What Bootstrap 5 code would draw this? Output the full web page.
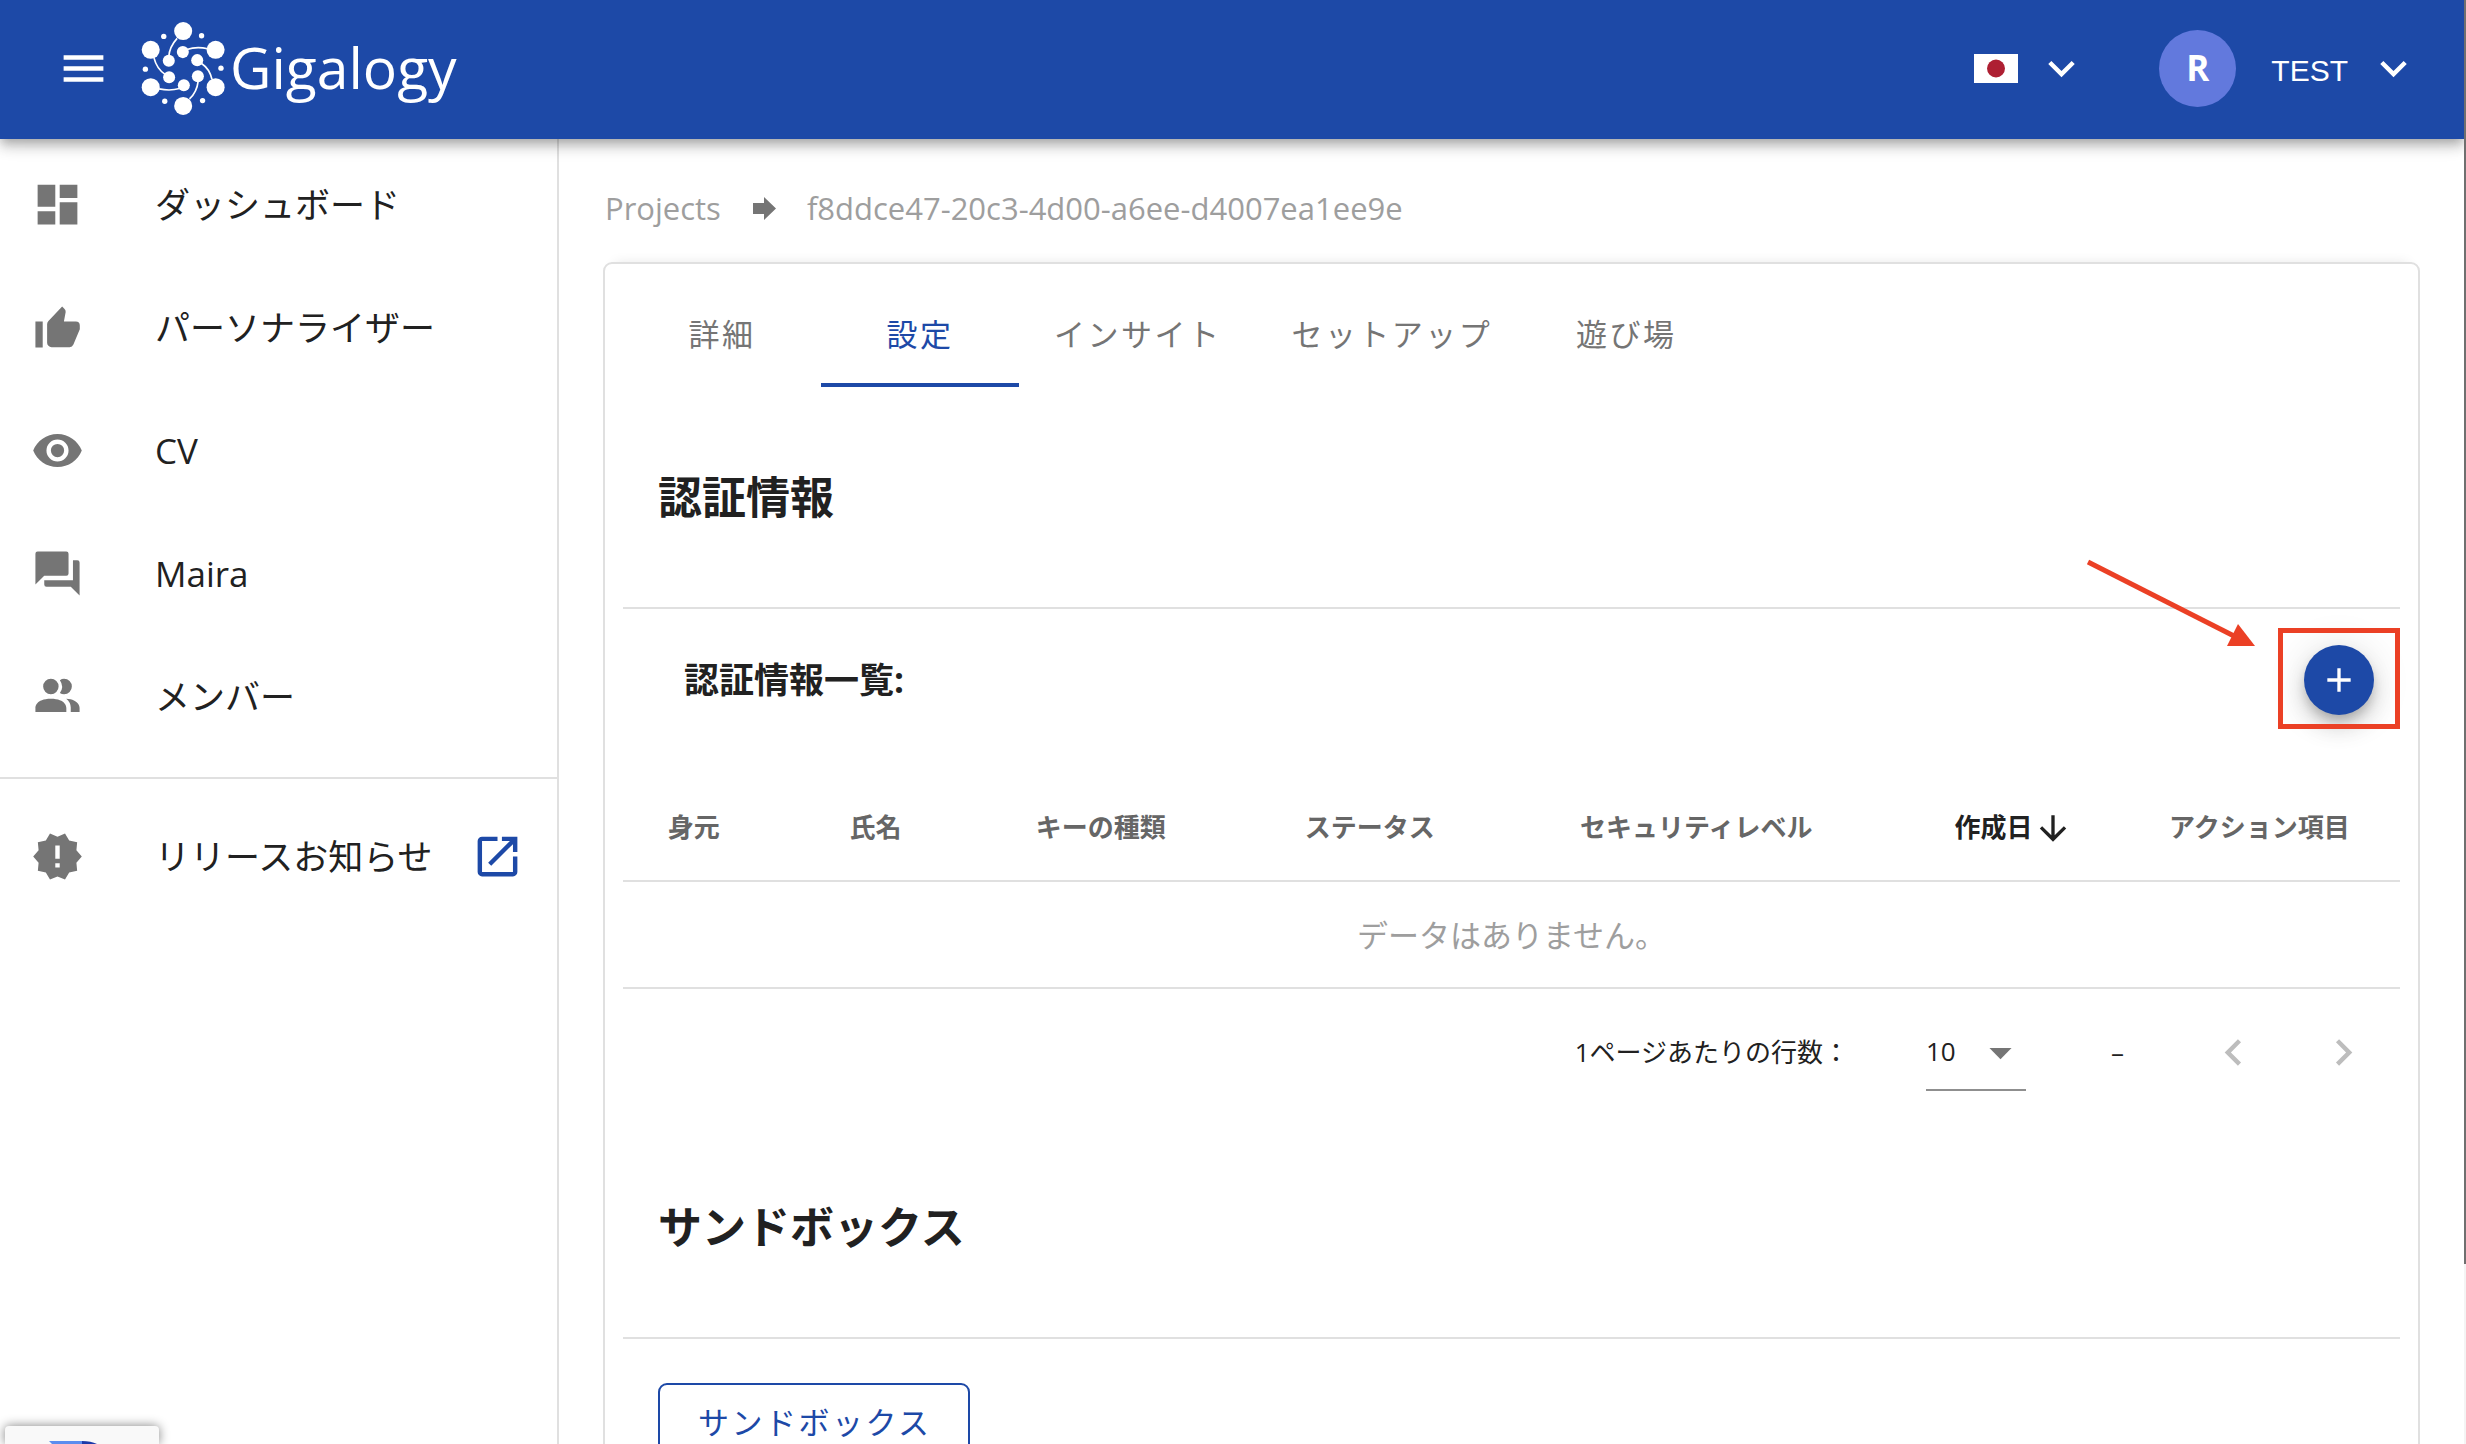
<!DOCTYPE html>
<html lang="ja">
<head>
<meta charset="utf-8">
<meta name="viewport" content="width=device-width, initial-scale=1">
<title>Gigalogy</title>
<link href="https://cdn.jsdelivr.net/npm/bootstrap@5.3.0/dist/css/bootstrap.min.css" rel="stylesheet">
<style>
:root{--brand:#1d49a7;--ink:#212121;--muted:#757575;--line:#e0e0e0}
body{font-family:"Open Sans","Noto Sans CJK JP",sans-serif;font-size:31px;line-height:44px;color:var(--ink);background:#fff;height:100vh;overflow:hidden;padding-right:2px}
svg{fill:currentColor;flex:none;display:block}
.ico{width:53px;height:53px}
.ico-sm{width:40px;height:40px}
button{color:inherit}
.topbar{height:139px;background:var(--brand);color:#fff;padding:0 44px 3px 57px;box-shadow:0 4px 9px -2px rgba(0,0,0,.2),0 9px 11px rgba(0,0,0,.14),0 2px 22px rgba(0,0,0,.12);z-index:5}
.plain{background:none;border:0;padding:0}
.brand-link{color:#fff;margin-left:30px}
.brand-mark{width:87px;height:97px}
.brand-name{font-size:57px;line-height:76px;margin-left:3px;padding-bottom:3px}
.flag{width:44px;height:29px}
.lang-caret{margin-left:17px}
.avatar{width:77px;height:77px;background:#6279dd;font-size:35px;font-weight:700}
.account{margin-left:71px}
.user-name{font-family:"Liberation Sans",sans-serif;font-size:30px;padding-top:5px;margin:0 19px 0 35px}
.side{width:559px;border-right:2px solid var(--line);padding-top:4px}
.side-link{height:123px;padding-left:31px;color:var(--ink);font-size:35px;text-decoration:none}
.side-link .ico{color:var(--muted);margin-right:71px}
.side-link .ico-ext{color:var(--brand);margin:0 0 0 38px}
.side-line{border-top:2px solid var(--line);margin:19px 0 16px}
.content{padding:0 44px}
.crumbs{padding:47px 0 32px 2px;color:#9e9e9e}
.crumbs a{color:inherit;text-decoration:none}
.crumbs svg{width:23px;height:23px;color:var(--muted);margin:0 31px 0 32px}
.panel{border:2px solid var(--line);border-radius:9px;padding:17px 18px 60px;box-shadow:0 -10px 12px -12px rgba(0,0,0,.12)}
.tab-item{min-width:198px;height:106px;padding:0 35px;border:0;border-bottom:4px solid transparent;background:none;color:var(--muted);letter-spacing:.08em;padding-top:4px}
.tab-item.active{color:var(--brand);border-color:var(--brand)}
.section-head{height:222px;border-bottom:2px solid var(--line);padding-left:35px}
.section-head h2{font-size:44px;line-height:60px;font-weight:700;margin:0}
.list-head{height:141px;padding:0 26px 0 61px;margin-bottom:24px}
.list-head h3{font-size:35px;line-height:50px;font-weight:700;margin:0}
.fab{width:70px;height:70px;background:var(--brand);color:#fff;box-shadow:0 7px 11px -2px rgba(0,0,0,.2),0 13px 22px rgba(0,0,0,.14),0 2px 40px rgba(0,0,0,.12)}
.callout-box{position:absolute;right:0;top:19px;width:122px;height:101px;border:5px solid #eb4025;pointer-events:none}
.callout-arrow{position:absolute;right:144px;top:-51px;width:172px;height:90px;color:#eb4025;pointer-events:none}
.keys th,.keys td{height:107px;padding:0 35px;border-bottom:2px solid var(--line);text-align:center;vertical-align:middle;white-space:nowrap}
.keys th{font-size:26px;line-height:40px;font-weight:700;color:#666}
.keys th.sorted{color:var(--ink)}
.keys th svg{visibility:hidden}
.keys th.sorted svg{visibility:visible}
.keys td{color:#9e9e9e;font-size:31px}
.pager{height:128px;padding:0 17px 2px 0;font-size:26px;line-height:40px}
.rows-pick{width:100px;height:78px;margin:0 85px 0 77px}
.rows-pick select{width:100%;height:100%;appearance:none;background:none;border:0;border-bottom:2px solid #8f8f8f;padding:0;color:inherit}
.rows-pick svg{position:absolute;right:-1px;top:13px;color:var(--muted);pointer-events:none}
.step{width:79px;height:79px;color:#bdbdbd}
.step-prev{margin:0 31px 0 70px}
.outline{height:80px;margin:44px 0 0 35px;padding:0 37px 2px 38px;border:2px solid var(--brand);border-radius:9px;background:none;color:var(--brand);letter-spacing:.08em}
.scroll-rail{position:fixed;top:0;right:0;width:2px;height:100vh;background:#f4f4f4;z-index:9}
.scroll-rail div{height:87.5%;background:#6f6f6f}
.captcha{position:fixed;left:5px;bottom:0;width:154px;height:18px;background:#f9f9f9;border-radius:4px 4px 0 0;box-shadow:0 0 11px #808080;z-index:6}
.captcha svg{margin:15px 0 0 44px}
</style>
<script src="https://cdn.jsdelivr.net/npm/bootstrap@5.3.0/dist/js/bootstrap.bundle.min.js"></script>
</head>
<body class="d-flex flex-column">
<header class="topbar d-flex align-items-center position-relative flex-shrink-0">
  <button class="plain" aria-label="メニュー"><svg class="ico" viewBox="0 0 24 24"><path d="M3 6H21V8H3ZM3 11H21V13H3ZM3 16H21V18H3Z"/></svg></button>
  <a class="brand-link d-flex align-items-center text-decoration-none" href="#">
    <svg class="brand-mark" viewBox="60 30 260 290">
      <g><circle cx="189" cy="63" r="27"/><circle cx="286" cy="119" r="27"/><circle cx="286" cy="231" r="27"/><circle cx="189" cy="287" r="27"/><circle cx="92" cy="231" r="27"/><circle cx="92" cy="119" r="27"/></g>
      <g><circle cx="146" cy="152" r="18"/><circle cx="188" cy="126" r="18"/><circle cx="231" cy="150" r="18"/><circle cx="233" cy="198" r="18"/><circle cx="191" cy="225" r="18"/><circle cx="147" cy="201" r="18"/></g>
      <g><circle cx="131" cy="79" r="8"/><circle cx="244" cy="77" r="8"/><circle cx="302" cy="174" r="8"/><circle cx="247" cy="271" r="8"/><circle cx="134" cy="273" r="8"/><circle cx="76" cy="177" r="8"/></g>
      <path d="M171 85Q148 110 146 140M200 118Q230 108 262 116M244 160Q268 176 275 207M234 212Q230 246 208 266M178 235Q150 243 117 236M102 144Q110 175 134 192" fill="none" stroke="currentColor" stroke-width="5"/>
    </svg>
    <span class="brand-name">Gigalogy</span>
  </a>
  <button class="plain d-flex align-items-center ms-auto" aria-label="言語">
    <svg class="flag" viewBox="0 0 44 29"><path fill="#fff" d="M0 0H44V29H0Z"/><circle cx="22" cy="14.5" r="9" fill="#ae1f32"/></svg>
    <svg class="ico lang-caret" viewBox="0 0 24 24"><path d="M7.41 8.58L12 13.17L16.59 8.58L18 10L12 16L6 10Z"/></svg>
  </button>
  <button class="plain account d-flex align-items-center">
    <span class="avatar rounded-circle d-flex align-items-center justify-content-center">R</span>
    <span class="user-name">TEST</span>
    <svg class="ico" viewBox="0 0 24 24"><path d="M7.41 8.58L12 13.17L16.59 8.58L18 10L12 16L6 10Z"/></svg>
  </button>
</header>

<div class="d-flex flex-grow-1" style="min-height:0">
  <nav class="side flex-shrink-0">
    <a class="side-link d-flex align-items-center" href="#"><svg class="ico" viewBox="0 0 24 24"><path d="M13 3V9H21V3M13 21H21V11H13M3 21H11V15H3M3 13H11V3H3Z"/></svg>ダッシュボード</a>
    <a class="side-link d-flex align-items-center" href="#"><svg class="ico" viewBox="0 0 24 24"><path d="M2 9.300H5.300V21H2ZM14.100 2.500L15.100 3.500Q15.800 4.100 15.700 5L14.900 9.300H20.300A1.800 1.800 0 0 1 22.100 11.100V12.800L19.200 19.700Q18.700 20.900 17.500 20.900H9.300A2 2 0 0 1 7.300 18.900V10.500Q7.300 9.700 7.900 9.100Z"/></svg>パーソナライザー</a>
    <a class="side-link d-flex align-items-center" href="#"><svg class="ico" viewBox="0 0 24 24"><path d="M12 9A3 3 0 0 0 9 12A3 3 0 0 0 12 15A3 3 0 0 0 15 12A3 3 0 0 0 12 9M12 17A5 5 0 0 1 7 12A5 5 0 0 1 12 7A5 5 0 0 1 17 12A5 5 0 0 1 12 17M12 4.500C7 4.500 2.730 7.610 1 12C2.730 16.390 7 19.500 12 19.500C17 19.500 21.270 16.390 23 12C21.270 7.610 17 4.500 12 4.500Z"/></svg>CV</a>
    <a class="side-link d-flex align-items-center" href="#"><svg class="ico" viewBox="0 0 24 24"><path d="M17 12V3A1 1 0 0 0 16 2H3A1 1 0 0 0 2 3V17L6 13H16A1 1 0 0 0 17 12M21 6H19V15H6V17A1 1 0 0 0 7 18H18L22 22V7A1 1 0 0 0 21 6Z"/></svg>Maira</a>
    <a class="side-link d-flex align-items-center" href="#"><svg class="ico" viewBox="0 0 24 24"><path d="M16 17V19H2V17S2 13 9 13 16 17 16 17M12.500 7.500A3.500 3.500 0 1 0 9 11A3.500 3.500 0 0 0 12.500 7.500M15.940 13A5.320 5.320 0 0 1 18 17V19H22V17S22 13.370 15.940 13M15 4A3.390 3.390 0 0 0 13.070 4.590A5 5 0 0 1 13.070 10.410A3.390 3.390 0 0 0 15 11A3.500 3.500 0 0 0 15 4Z"/></svg>メンバー</a>
    <div class="side-line"></div>
    <a class="side-link d-flex align-items-center" href="#"><svg class="ico" viewBox="0 0 24 24"><path d="M23 12L20.560 9.220L20.900 5.540L17.290 4.720L15.400 1.540L12 3L8.600 1.540L6.710 4.720L3.100 5.530L3.440 9.210L1 12L3.440 14.780L3.100 18.470L6.710 19.290L8.600 22.470L12 21L15.400 22.460L17.290 19.280L20.900 18.460L20.560 14.780L23 12M13 17H11V15H13V17M13 13H11V7H13V13Z"/></svg>リリースお知らせ<svg class="ico ico-ext" viewBox="0 0 24 24"><path d="M19 19H5V5h7V3H5c-1.110 0-2 .9-2 2v14c0 1.100.89 2 2 2h14c1.100 0 2-.9 2-2v-7h-2v7zM14 3v2h3.590l-9.830 9.830 1.410 1.410L19 6.410V10h2V3h-7z"/></svg></a>
  </nav>

  <main class="content flex-grow-1" style="min-width:0">
    <div class="crumbs d-flex align-items-center">
      <a href="#">Projects</a>
      <svg viewBox="0 0 23 23"><path d="M0 6H11V0L23 11.500L11 23V17H0Z"/></svg>
      <span>f8ddce47-20c3-4d00-a6ee-d4007ea1ee9e</span>
    </div>
    <div class="panel">
      <div class="d-flex" role="tablist">
        <button class="tab-item" role="tab">詳細</button>
        <button class="tab-item active" role="tab" aria-selected="true">設定</button>
        <button class="tab-item" role="tab">インサイト</button>
        <button class="tab-item" role="tab">セットアップ</button>
        <button class="tab-item" role="tab">遊び場</button>
      </div>
      <div class="section-head d-flex align-items-center"><h2>認証情報</h2></div>
      <div class="list-head d-flex align-items-center justify-content-between position-relative">
        <h3>認証情報一覧:</h3>
        <button class="plain fab rounded-circle d-flex align-items-center justify-content-center" aria-label="追加"><svg class="ico-sm" viewBox="0 0 24 24"><path d="M19 13H13V19H11V13H5V11H11V5H13V11H19Z"/></svg></button>
        <div class="callout-box"></div>
        <svg class="callout-arrow" viewBox="0 0 172 90"><path d="M4 4L150 78" stroke="currentColor" stroke-width="5"/><path d="M171 88H143L154 66Z"/></svg>
      </div>
      <table class="keys w-100">
        <thead><tr>
          <th><span class="d-inline-flex">身元<svg class="ico-sm"></svg></span></th>
          <th><span class="d-inline-flex">氏名<svg class="ico-sm"></svg></span></th>
          <th><span class="d-inline-flex">キーの種類<svg class="ico-sm"></svg></span></th>
          <th><span class="d-inline-flex">ステータス<svg class="ico-sm"></svg></span></th>
          <th><span class="d-inline-flex">セキュリティレベル<svg class="ico-sm"></svg></span></th>
          <th class="sorted" aria-sort="descending"><span class="d-inline-flex align-items-center">作成日<svg class="ico-sm" viewBox="0 0 24 24"><path d="M11 5H13V17L18.500 11.500L19.920 12.920L12 20.840L4.080 12.920L5.500 11.500L11 17Z"/></svg></span></th>
          <th>アクション項目</th>
        </tr></thead>
        <tbody><tr><td colspan="7">データはありません。</td></tr></tbody>
      </table>
      <div class="pager d-flex align-items-center justify-content-end">
        <label for="rows">1ページあたりの行数：</label>
        <div class="rows-pick position-relative">
          <select id="rows"><option>10</option><option>25</option><option>50</option></select>
          <svg class="ico" viewBox="0 0 24 24"><path d="M7 10L12 15L17 10Z"/></svg>
        </div>
        <span>–</span>
        <button class="plain step step-prev d-flex align-items-center justify-content-center" aria-label="前へ" disabled><svg class="ico" viewBox="0 0 24 24"><path d="M15.410 16.580L10.830 12L15.410 7.410L14 6L8 12L14 18Z"/></svg></button>
        <button class="plain step d-flex align-items-center justify-content-center" aria-label="次へ" disabled><svg class="ico" viewBox="0 0 24 24"><path d="M8.590 16.580L13.170 12L8.590 7.410L10 6L16 12L10 18Z"/></svg></button>
      </div>
      <div class="section-head d-flex align-items-center"><h2>サンドボックス</h2></div>
      <button class="outline">サンドボックス</button>
    </div>
  </main>
</div>
<div class="captcha"><svg width="50" height="3" viewBox="0 0 50 3"><path fill="#5b8def" d="M0 0H33V3H3Z"/><path fill="#1c3aa9" d="M33 0Q42 0 48 3H33Z"/></svg></div>
<div class="scroll-rail"><div></div></div>
</body>
</html>
